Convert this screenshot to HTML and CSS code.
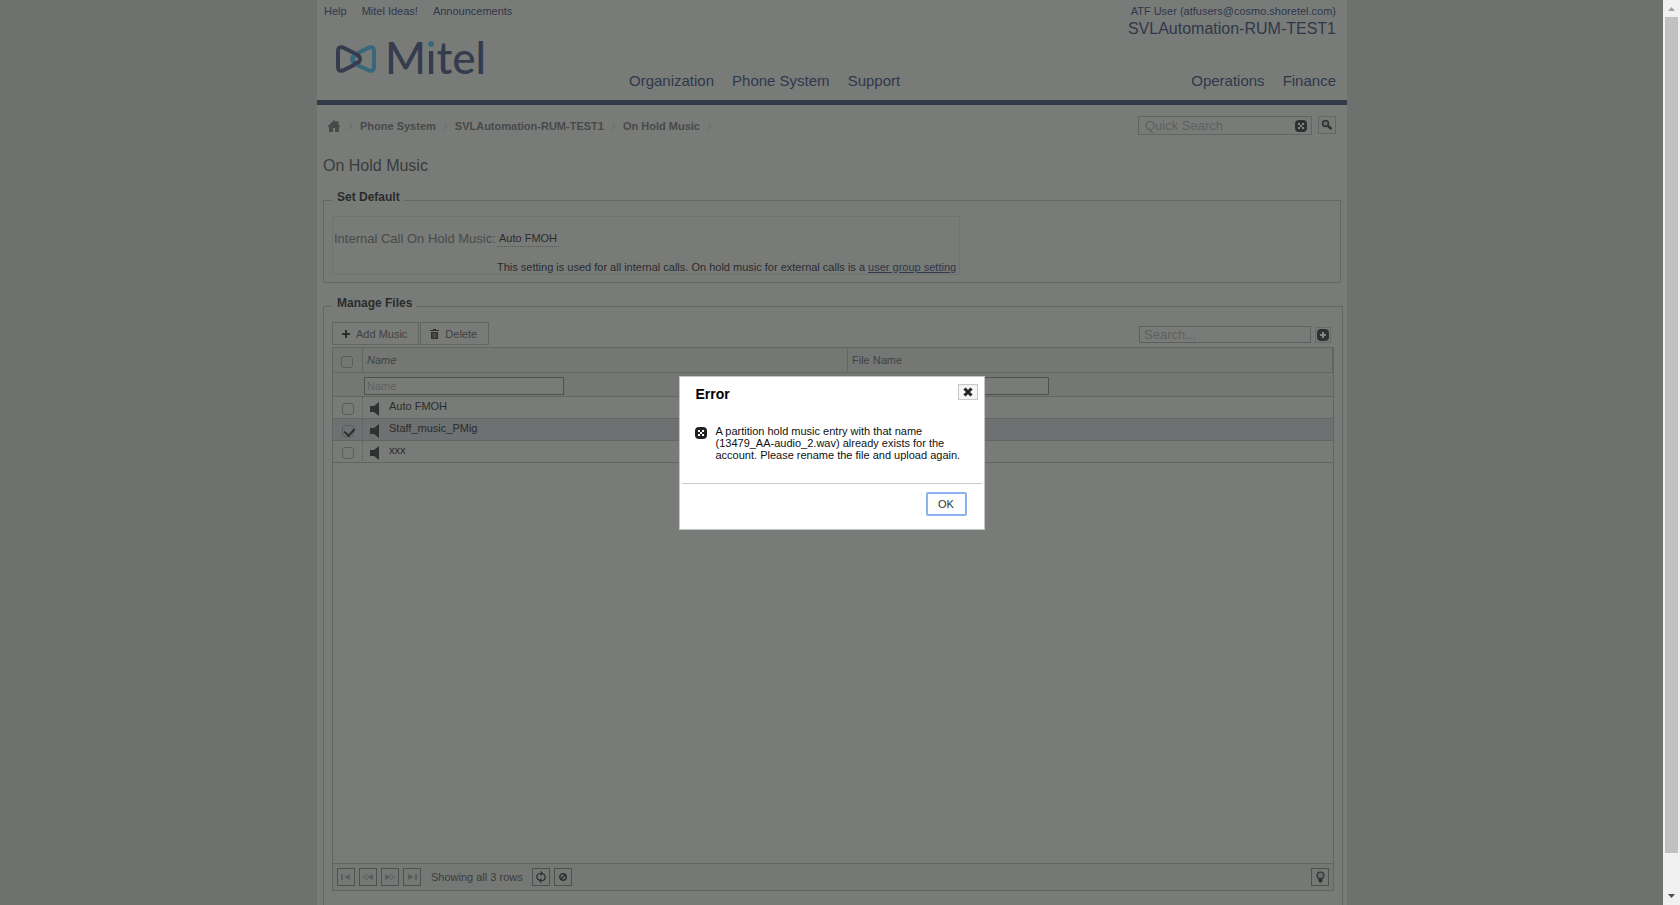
FILE: index.html
```html
<!DOCTYPE html>
<html lang="en">
<head>
<meta charset="utf-8">
<title>On Hold Music</title>
<link rel="stylesheet" href="styles.css">
</head>
<body>
<div class="desk">
  <div class="page">
    <header class="header">
      <div class="topline">
        <nav class="toplinks"><a href="#">Help</a><a href="#">Mitel Ideas!</a><a href="#">Announcements</a></nav>
        <div class="account"><a href="#">ATF User (atfusers@cosmo.shoretel.com)</a><span class="account-name">SVLAutomation-RUM-TEST1</span></div>
      </div>
      <a class="logo" href="#">
        <svg width="40" height="30" viewBox="0 0 40 30" fill="none" stroke-width="4" stroke-linejoin="round">
          <path d="M22 9 33 3.500Q38 2 38 7V23Q38 28 33 26.500L19 20Q14 16 19 11.500" stroke="#36677b"/>
          <path d="M19 20.500 7 26.500Q2 28 2 23V7Q2 2 7 3.500L21 10.500Q26 14 23 18Q20.500 20 18.500 17.500" stroke="#343c4e"/>
          <path d="M17.500 18Q14.500 14.500 18 11.500" stroke="#36677b"/>
        </svg>
        <span class="wordmark">M<span class="wordmark-i">i</span>tel</span>
      </a>
      <nav class="mainnav">
        <a href="#">Organization</a><a href="#">Phone System</a><a href="#">Support</a>
        <a class="push" href="#">Operations</a><a href="#">Finance</a>
      </nav>
    </header>

    <div class="crumbrow">
      <nav class="crumbs">
        <a class="home" href="#" aria-label="Home"><svg width="12" height="12" viewBox="0 0 12 12"><path d="M6 0 0 6v1h1v5h4V8h2v4h4V7h1V6l-1.500-1.500V1H8.500v1.500z" fill="#484a49"/></svg></a>
        <svg class="chev" width="5" height="8" viewBox="0 0 5 8"><path d="M1 .5 4 4 1 7.500"/></svg>
        <a href="#">Phone System</a>
        <svg class="chev" width="5" height="8" viewBox="0 0 5 8"><path d="M1 .5 4 4 1 7.500"/></svg>
        <a href="#">SVLAutomation-RUM-TEST1</a>
        <svg class="chev" width="5" height="8" viewBox="0 0 5 8"><path d="M1 .5 4 4 1 7.500"/></svg>
        <a href="#">On Hold Music</a>
        <svg class="chev" width="5" height="8" viewBox="0 0 5 8"><path d="M1 .5 4 4 1 7.500"/></svg>
      </nav>
      <div class="quick">
        <div class="quickbox">
          <input type="text" placeholder="Quick Search" aria-label="Quick Search">
          <button type="button" class="bare" aria-label="Clear"><svg width="12" height="12" viewBox="0 0 12 12"><rect width="12" height="12" rx="4" fill="#303231"/><path d="M3 3h2v2H3zM7 3h2v2H7zM5 5h2v2H5zM3 7h2v2H3zM7 7h2v2H7z" fill="#858785"/></svg></button>
        </div>
        <button type="button" class="iconbtn soft" aria-label="Search"><svg width="12" height="12" viewBox="0 0 12 12"><circle cx="4.500" cy="4.500" r="3" fill="#696b6a" stroke="#303231" stroke-width="1.500"/><path d="m7 7 3.500 3" stroke="#303231" stroke-width="2.500"/></svg></button>
      </div>
    </div>

    <h1>On Hold Music</h1>

    <fieldset class="group defaults">
      <legend>Set Default</legend>
      <div class="setting">
        <span class="setting-label">Internal Call On Hold Music:</span>
        <span><a class="setting-value" href="#">Auto FMOH</a></span>
        <p>This setting is used for all internal calls. On hold music for external calls is a <a href="#">user group setting</a></p>
      </div>
    </fieldset>

    <fieldset class="group files">
      <legend>Manage Files</legend>
      <div class="toolbar">
        <button type="button" class="tool"><svg width="8" height="8" viewBox="0 0 8 8"><path d="M4 0v8M0 4h8" stroke="#2c2e2d" stroke-width="2"/></svg>Add Music</button>
        <button type="button" class="tool"><svg width="9" height="10" viewBox="0 0 9 10"><path d="M0 1.500h9M3 .5h3" stroke="#303231" stroke-width="1"/><path d="M1 3h7v7H1z" fill="#303231"/><path d="M3 4v5M4.500 4v5M6 4v5" stroke="#696b6a" stroke-width=".6"/></svg>Delete</button>
        <input class="search" type="text" placeholder="Search..." aria-label="Search">
        <button type="button" class="plusbtn" aria-label="Advanced search"><svg width="12" height="12" viewBox="0 0 12 12"><rect width="12" height="12" rx="4" fill="#303231"/><path d="M6 3v6M3 6h6" stroke="#858785" stroke-width="2"/></svg></button>
      </div>
      <div class="grid">
        <div class="gridbody">
          <table>
            <colgroup><col class="c-check"><col class="c-name"><col></colgroup>
            <thead>
              <tr class="heads"><th><input type="checkbox" aria-label="Select all"></th><th class="sorted">Name</th><th>File Name</th></tr>
              <tr class="filters"><td></td><td><input type="text" placeholder="Name" aria-label="Filter by name"></td><td><input type="text" aria-label="Filter by file name"></td></tr>
            </thead>
            <tbody>
              <tr><td><input type="checkbox" aria-label="Select Auto FMOH"></td><td><div class="entry"><svg width="9" height="14" viewBox="0 0 9 14"><path d="M9 0v14L4 10H0V4h4z" fill="#303231"/></svg><span>Auto FMOH</span></div></td><td></td></tr>
              <tr class="selected"><td><input type="checkbox" checked aria-label="Select Staff_music_PMig"></td><td><div class="entry"><svg width="9" height="14" viewBox="0 0 9 14"><path d="M9 0v14L4 10H0V4h4z" fill="#303231"/></svg><span>Staff_music_PMig</span></div></td><td></td></tr>
              <tr><td><input type="checkbox" aria-label="Select xxx"></td><td><div class="entry"><svg width="9" height="14" viewBox="0 0 9 14"><path d="M9 0v14L4 10H0V4h4z" fill="#303231"/></svg><span>xxx</span></div></td><td></td></tr>
            </tbody>
          </table>
        </div>
        <div class="pager">
          <button type="button" class="iconbtn" aria-label="First page"><svg width="10" height="6" viewBox="0 0 10 6" fill="#5c5e5d"><path d="M0 0h2v6H0zM9 0v6L3 3z"/></svg></button>
          <button type="button" class="iconbtn" aria-label="Previous page"><svg width="12" height="6" viewBox="0 0 12 6" fill="#5c5e5d"><path d="M11 0v6L5 3z"/><path d="M6 0 1 3l5 3" fill="none" stroke="#5c5e5d"/></svg></button>
          <button type="button" class="iconbtn" aria-label="Next page"><svg width="12" height="6" viewBox="0 0 12 6" fill="#5c5e5d"><path d="M1 0v6l6-3z"/><path d="m6 0 5 3-5 3" fill="none" stroke="#5c5e5d"/></svg></button>
          <button type="button" class="iconbtn" aria-label="Last page"><svg width="10" height="6" viewBox="0 0 10 6" fill="#5c5e5d"><path d="M8 0h2v6H8zM1 0v6l6-3z"/></svg></button>
          <span class="status">Showing all 3 rows</span>
          <button type="button" class="iconbtn" aria-label="Refresh"><svg width="10" height="12" viewBox="0 0 10 12" fill="none" stroke="#303231" stroke-width="1.200"><path d="M3 9C0 8 0 3 3.500 2.500H6M4.500 .5l2 2-2 2M7 3C10 4 10 9 6.500 9.500H4M5.500 7.500l-2 2 2 2"/></svg></button>
          <button type="button" class="iconbtn" aria-label="Clear filter"><svg width="8" height="8" viewBox="0 0 8 8"><circle cx="4" cy="4" r="3.200" fill="none" stroke="#303231" stroke-width="1.600"/><path d="M6.500 1.500l-5 5" stroke="#303231" stroke-width="1.600"/></svg></button>
          <button type="button" class="iconbtn push" aria-label="Tips"><svg width="9" height="12" viewBox="0 0 9 12"><path d="M3 7.500C0 6 .5 1 4.500 1S9 6 6 7.500z" fill="#696b6a" stroke="#303231" stroke-width="1.200"/><path d="M2.500 8h4v2l-1 1.500h-2l-1-1.500z" fill="#303231"/></svg></button>
        </div>
      </div>
    </fieldset>
  </div>
</div>

<div class="scrollbar" aria-hidden="true">
  <svg width="7" height="4" viewBox="0 0 7 4"><path d="M3.500 0 7 4H0z" fill="#a3a3a3"/></svg>
  <div class="thumb"></div>
  <svg width="7" height="4" viewBox="0 0 7 4"><path d="M0 0h7L3.500 4z" fill="#505050"/></svg>
</div>

<div class="overlay">
  <div class="dialog" role="alertdialog" aria-labelledby="dialog-title" aria-describedby="dialog-text">
    <div class="dialog-head">
      <h2 id="dialog-title">Error</h2>
      <button type="button" class="close" aria-label="Close"><svg width="10" height="10" viewBox="0 0 10 10"><path d="m1.500 1.500 7 7m0-7-7 7" stroke="#222" stroke-width="3"/></svg></button>
    </div>
    <div class="dialog-body">
      <svg width="12" height="12" viewBox="0 0 12 12"><rect width="12" height="12" rx="4" fill="#222"/><path d="M3 3h2v2H3zM7 3h2v2H7zM5 5h2v2H5zM3 7h2v2H3zM7 7h2v2H7z" fill="#fff"/></svg>
      <p id="dialog-text">A partition hold music entry with that name (13479_AA-audio_2.wav) already exists for the account. Please rename the file and upload again.</p>
    </div>
    <div class="dialog-foot"><button type="button" class="ok">OK</button></div>
  </div>
</div>
</body>
</html>
```
FILE: styles.css
```css
* { box-sizing: border-box; }

body {
  margin: 0;
  height: 100vh;
  overflow: hidden;
  display: flex;
  background: #6f716f;
  font: 11px/12px "Liberation Sans", Arial, sans-serif;
  color: #2a2c2c;
}

button, input { font: inherit; color: inherit; margin: 0; }
a { color: inherit; text-decoration: none; }
svg { display: block; flex: none; }
p, h1, h2 { margin: 0; font-weight: normal; }
.push { margin-left: auto; }

.desk { flex: 1; min-width: 0; padding-left: 1px; }

.page {
  max-width: 1030px;
  height: 100%;
  margin: 0 auto;
  background: #797b79;
  display: flex;
  flex-direction: column;
}

/* header */
.header {
  height: 105px;
  flex: none;
  padding: 5px 11px 0 7px;
  border-bottom: 5px solid #333b4b;
  color: #2f384a;
  display: flex;
  flex-direction: column;
}
.topline { display: flex; justify-content: space-between; height: 32px; }
.toplinks { display: flex; gap: 15px; }
.account { display: flex; flex-direction: column; align-items: flex-end; }
.account-name { font-size: 16px; line-height: 24px; }
.logo { display: flex; align-items: center; gap: 9px; height: 35px; padding-left: 12px; }
.logo svg { margin-top: 9px; }
.wordmark { font: 500 44px/44px Lato, sans-serif; color: #343c4e; margin-top: 4px; }
.wordmark-i {
  background: linear-gradient(#36677b 16px, #343c4e 16px);
  background-clip: text;
  -webkit-background-clip: text;
  color: transparent;
}
.mainnav { display: flex; gap: 18px; padding-left: 305px; font-size: 15px; line-height: 18px; }

/* breadcrumb row */
.crumbrow { display: flex; justify-content: space-between; padding: 11px 11px 0 11px; }
.crumbs { display: flex; align-items: center; font-weight: bold; color: #484a4a; height: 20px; }
.home { margin-right: 1px; }
.chev { margin: 0 7px; fill: none; stroke: #666867; }
.quick { display: flex; gap: 6px; }
.quickbox {
  width: 174px;
  height: 19px;
  border: 1px solid #636563;
  display: flex;
  align-items: center;
  padding: 0 4px 0 6px;
}
.quickbox input {
  flex: 1;
  min-width: 0;
  border: 0;
  padding: 0;
  background: none;
  font-size: 13px;
  line-height: 16px;
}
::placeholder { color: #5f6160; opacity: 1; }
.bare { border: 0; padding: 0; background: none; }
.iconbtn {
  width: 18px;
  height: 18px;
  padding: 0;
  border: 1px solid #4f5150;
  background: none;
  display: grid;
  place-items: center;
}
.soft { border-color: #656765; }

h1 { margin: 21px 6px 0; font-size: 16px; line-height: 18px; color: #3a3c3b; }

/* groups */
.group {
  margin: 0 6px;
  min-width: 0;
  border: 1px solid #656765;
  padding: 6px 8px 7px;
}
.group legend { padding: 0 4px 6px 5px; font-size: 12px; line-height: 14px; font-weight: bold; }
.defaults { margin-top: 15px; }
.setting {
  width: 628px;
  max-width: 100%;
  border: 1px solid #717371;
  padding: 13px 2px 1px 1px;
  display: grid;
  grid-template-columns: 163px 1fr;
  row-gap: 14px;
}
.setting-label { font-size: 13px; line-height: 17px; color: #484a4a; }
.setting-value { display: inline-block; line-height: 16px; padding: 0 2px; border-bottom: 1px dotted #555756; }
.setting p { grid-column: 2; line-height: 12px; }
.setting p a { color: #2f384a; text-decoration: underline; }

.files {
  flex: 1;
  margin: 13px 4px 0 6px;
  border-bottom: 0;
  padding-bottom: 14px;
  display: flex;
  flex-direction: column;
}
.toolbar { display: flex; align-items: center; height: 23px; margin-bottom: 2px; }
.tool {
  height: 23px;
  border: 1px solid #636563;
  background: none;
  padding: 0 11px 0 9px;
  margin-right: 1px;
  display: flex;
  align-items: center;
  gap: 6px;
  color: #404242;
}
.search {
  width: 172px;
  height: 17px;
  margin: 2px 0 0 auto;
  border: 1px solid #5f6160;
  background: none;
  padding: 0 4px;
  font-size: 13px;
}
.plusbtn { margin: 2px 3px 0 4px; width: 16px; height: 16px; padding: 1px; border: 1px solid #696b69; background: none; }

/* grid */
.grid { flex: 1; border: 1px solid #636563; display: flex; flex-direction: column; }
.gridbody { flex: 1; }
table { width: 100%; table-layout: fixed; border-collapse: separate; border-spacing: 0; }
.c-check { width: 30px; }
.c-name { width: 485px; }
th, td { padding: 0; border-bottom: 1px solid #636563; text-align: left; font-weight: normal; }
thead { background: #757775; color: #404242; }
.heads th { height: 25px; padding-left: 4px; border-right: 1px solid #636563; }
.heads th:first-child { padding-left: 8px; }
.sorted { font-style: italic; }
.filters td { height: 24px; padding: 4px 0 1px 1px; }
.filters input {
  display: block;
  width: 200px;
  height: 18px;
  border: 1px solid #4f5150;
  padding: 0 2px;
  background: #797b79;
}
tbody td { height: 22px; }
tbody td:first-child { padding-left: 9px; border-right: 1px dotted #5c5e5d; }
.selected { background: #6f7072; }
.entry { display: flex; gap: 10px; padding-left: 7px; height: 21px; }
.entry svg { margin-top: 5px; }
.entry span { line-height: 18px; }

input[type="checkbox"] {
  appearance: none;
  display: block;
  position: relative;
  width: 12px;
  height: 12px;
  border: 1px solid #5a5c5b;
  border-radius: 3px;
  margin-top: 3px;
}
input[type="checkbox"]:checked::after {
  content: "";
  position: absolute;
  left: 3px;
  top: 0;
  width: 5px;
  height: 8px;
  border: solid #2c2e2d;
  border-width: 0 2px 2px 0;
  transform: rotate(42deg);
}

.pager {
  height: 27px;
  padding: 0 4px;
  border-top: 1px solid #636563;
  background: #767876;
  display: flex;
  align-items: center;
  gap: 4px;
}
.status { margin: 0 5px 0 6px; color: #3a3c3b; }

/* window scrollbar */
.scrollbar {
  width: 17px;
  background: #f1f1f1;
  display: flex;
  flex-direction: column;
  align-items: center;
  padding: 7px 0;
}
.thumb { width: 13px; flex: 1; margin: 6px 0 41px; background: #c1c1c1; }

/* dialog */
.overlay { position: fixed; inset: 0 17px 0 0; display: grid; place-items: center; }
.dialog { width: 306px; border: 1px solid #c4c6c5; background: #fff; color: #111; padding: 7px 2px 13px; }
.dialog-head { display: flex; justify-content: space-between; padding: 0 4px 0 14px; }
h2 { font-size: 14px; line-height: 16px; font-weight: bold; color: #000; margin-top: 2px; }
.close { width: 20px; height: 16px; padding: 0; border: 1px solid #c8c8c8; background: #f4f4f4; display: grid; place-items: center; }
.dialog-body { display: flex; gap: 9px; padding: 23px 15px 22px 13px; }
.dialog-body svg { margin-top: 2px; }
.dialog-foot { border-top: 1px solid #ccc; padding: 8px 15px 0; display: flex; justify-content: flex-end; }
.ok { width: 41px; height: 24px; padding: 0; border: 2px solid #8cb2ee; border-radius: 2px; background: #fcfdfd; color: #333; }
```
